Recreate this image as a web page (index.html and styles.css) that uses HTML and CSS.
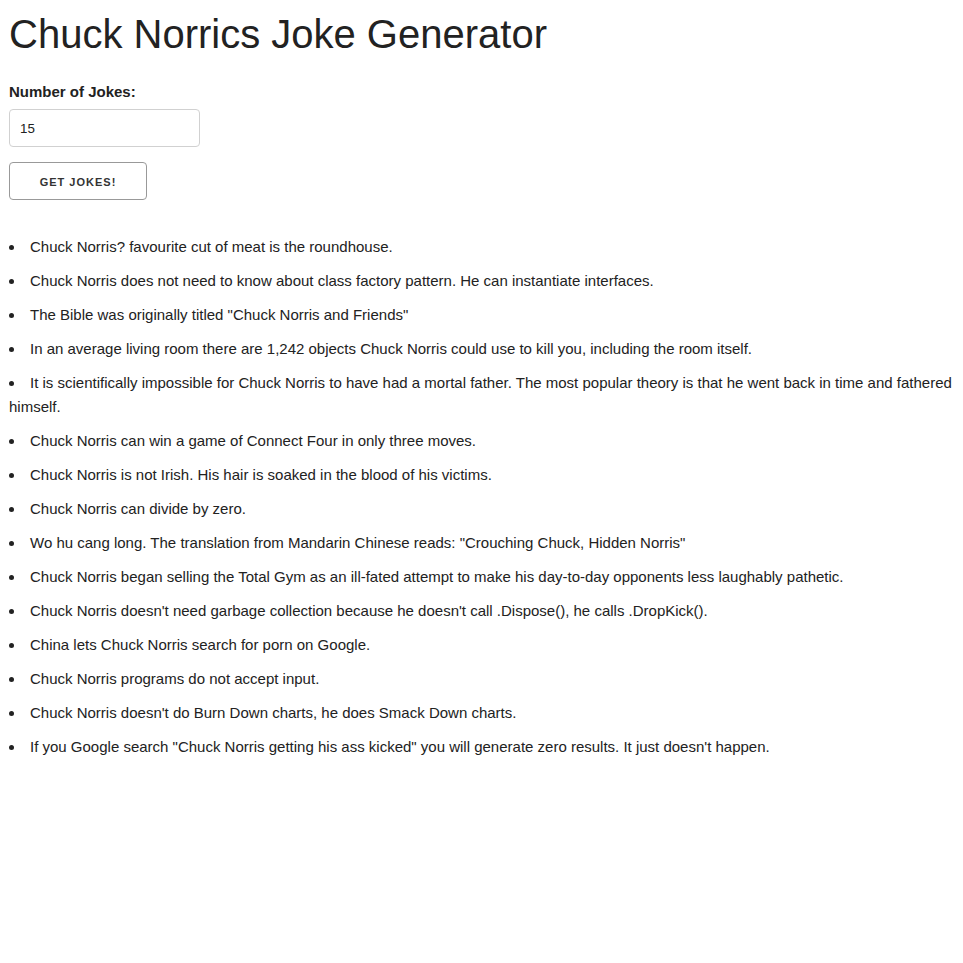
FILE: index.html
```html
<!DOCTYPE html>
<html>
<head>
<meta charset="utf-8">
<link rel="stylesheet" href="styles.css">
</head>
<body>
<h1 class="title">Chuck Norrics Joke Generator</h1>
<form class="form">
  <label class="label" for="n">Number of Jokes:</label>
  <input class="input" id="n" type="number" value="15">
  <button class="button" type="button">Get Jokes!</button>
</form>
<ul class="jokes">
  <li>Chuck Norris? favourite cut of meat is the roundhouse.</li>
  <li>Chuck Norris does not need to know about class factory pattern. He can instantiate interfaces.</li>
  <li>The Bible was originally titled "Chuck Norris and Friends"</li>
  <li>In an average living room there are 1,242 objects Chuck Norris could use to kill you, including the room itself.</li>
  <li>It is scientifically impossible for Chuck Norris to have had a mortal father. The most popular theory is that he went back in time and fathered himself.</li>
  <li>Chuck Norris can win a game of Connect Four in only three moves.</li>
  <li>Chuck Norris is not Irish. His hair is soaked in the blood of his victims.</li>
  <li>Chuck Norris can divide by zero.</li>
  <li>Wo hu cang long. The translation from Mandarin Chinese reads: "Crouching Chuck, Hidden Norris"</li>
  <li>Chuck Norris began selling the Total Gym as an ill-fated attempt to make his day-to-day opponents less laughably pathetic.</li>
  <li>Chuck Norris doesn't need garbage collection because he doesn't call .Dispose(), he calls .DropKick().</li>
  <li>China lets Chuck Norris search for porn on Google.</li>
  <li>Chuck Norris programs do not accept input.</li>
  <li>Chuck Norris doesn't do Burn Down charts, he does Smack Down charts.</li>
  <li>If you Google search "Chuck Norris getting his ass kicked" you will generate zero results. It just doesn't happen.</li>
</ul>
</body>
</html>
```
FILE: styles.css
```css
body {
  margin: 8px 8px 8px 9px;
  font-family: "Liberation Sans", Arial, sans-serif;
  font-size: 15px;
  line-height: 1.6;
  color: #222;
  background: #fff;
}
.title {
  margin: 2px 0 22px;
  font-size: 40px;
  line-height: 1.2;
  font-weight: normal;
  letter-spacing: 0;
}
.form {
  margin: 0;
}
.label {
  display: block;
  font-weight: bold;
  margin-bottom: 5px;
}
.input {
  display: block;
  box-sizing: border-box;
  width: 191px;
  height: 38px;
  padding: 6px 10px;
  border: 1px solid #d1d1d1;
  border-radius: 4px;
  font-family: "Liberation Sans", Arial, sans-serif;
  font-size: 13.33px;
  color: #222;
  margin: 0 0 15px;
  -moz-appearance: textfield;
}
.input::-webkit-inner-spin-button,
.input::-webkit-outer-spin-button {
  -webkit-appearance: none;
  margin: 0;
}
.button {
  display: block;
  box-sizing: border-box;
  width: 138px;
  height: 38px;
  padding: 0;
  text-align: center;
  background: transparent;
  border: 1px solid #999;
  border-radius: 4px;
  font-family: "Liberation Sans", Arial, sans-serif;
  font-size: 11px;
  font-weight: bold;
  letter-spacing: 1px;
  text-transform: uppercase;
  color: #333;
  margin: 0 0 35px;
  line-height: 38px;
}
.jokes {
  list-style: disc inside;
  padding: 0;
  margin: 0;
}
.jokes li {
  margin-bottom: 10px;
}
```
